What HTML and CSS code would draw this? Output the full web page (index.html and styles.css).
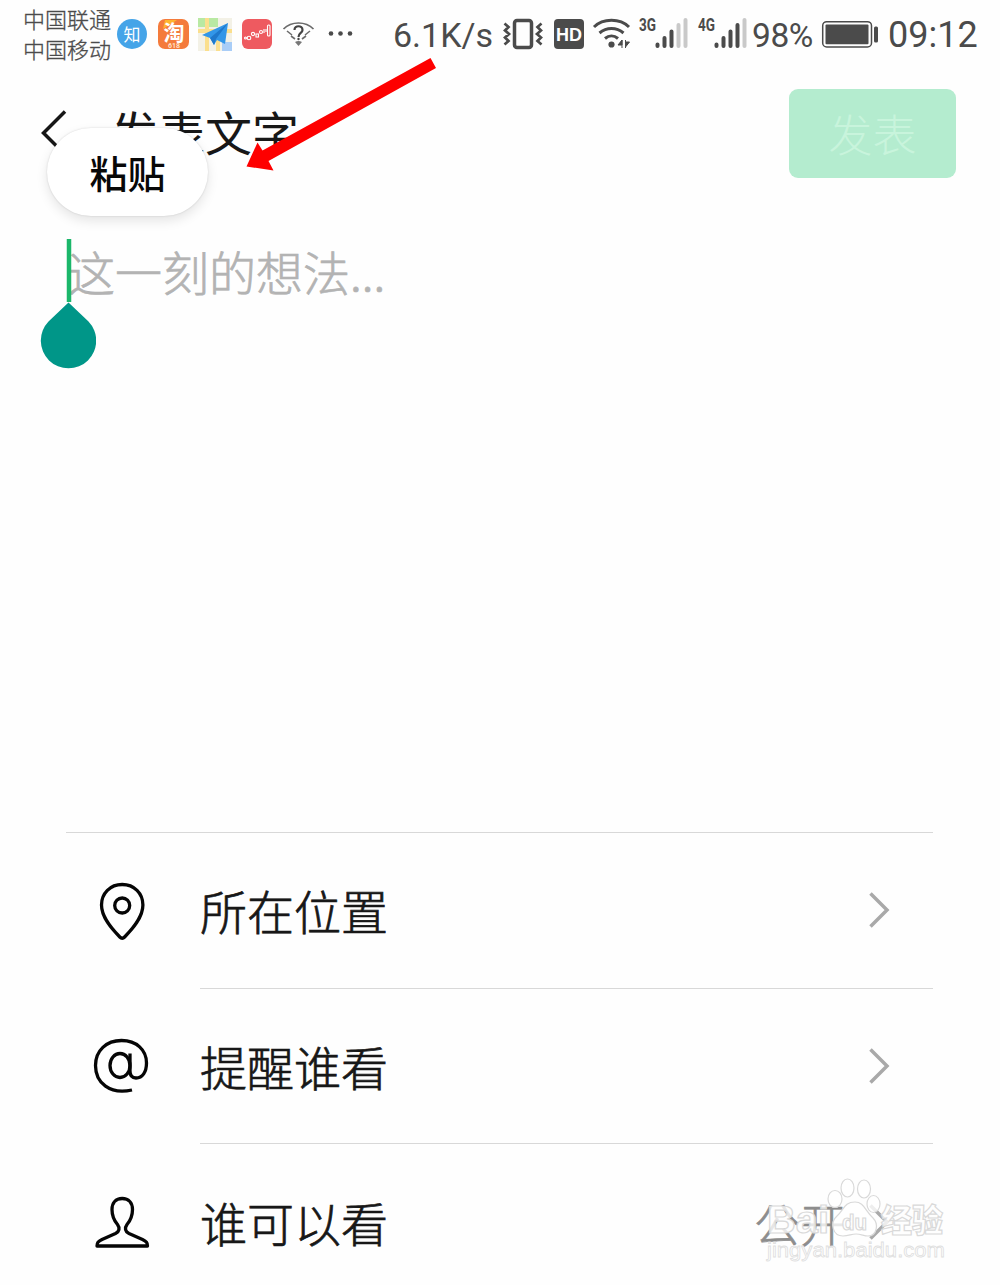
FILE: index.html
```html
<!DOCTYPE html>
<html lang="zh-CN">
<head>
<meta charset="utf-8">
<title>发表文字</title>
<link rel="stylesheet" href="styles.css">
</head>
<body>
<div class="screen">
  <header class="status">
    <div class="carriers"><div>中国联通</div><div>中国移动</div></div>
    <svg class="notices" width="240" height="40" viewBox="116 14 240 40">
      <circle cx="132" cy="34" r="15" fill="#45a4e8"/>
      <text x="132" y="40.500" class="zhi">知</text>
      <rect x="158" y="19" width="31" height="30" rx="7" fill="#f47b3c"/>
      <path d="M165 20h12l-14 9z" fill="#ffb52e"/>
      <text x="174" y="39.500" class="tao">淘</text>
      <text x="174" y="47.500" class="sale">618</text>
      <rect x="198" y="18" width="34" height="33" fill="#f3f1e6"/>
      <path d="M198 18h20v9h-20z" fill="#b9e9a3"/>
      <path d="M222 42h10v9h-10z" fill="#a9cdf7"/>
      <path d="M207 18v33M198 31h34M218 39v12" stroke="#fbdf8d" stroke-width="4"/>
      <path d="M228 23L202 35l8 3 4 7 3-5 8 4z" fill="#3296e8"/>
      <path d="M228 23L210 38l4 7 2-6z" fill="#1f78cb"/>
      <rect x="242" y="19" width="30" height="30" rx="6" fill="#ee5a60"/>
      <g fill="none" stroke="#fff" stroke-width="1.100">
        <circle cx="245.500" cy="38" r="1"/><circle cx="249" cy="38" r="1.800"/><circle cx="253" cy="34" r="1.600"/><rect x="256" y="34" width="2.500" height="3"/><circle cx="261" cy="32" r="1.500"/><path d="M264 29v4M266 29v3"/><rect x="267.500" y="25" width="2.500" height="11" rx="1"/>
      </g>
      <g fill="none" stroke="#6b6b6b" stroke-width="1.700">
        <path d="M283.500 29c8-8 22-8 30 0"/>
        <path d="M287 31l5 4M291 36l4 3M310 31l-5 4M306 36l-4 3" stroke-width="1.600"/>
        <path d="M294.500 30c0-5 8-5 8 0 0 3-4 3-4 7" stroke="#444" stroke-width="2.200"/>
      </g>
      <circle cx="298.500" cy="39" r="1.200" fill="#444"/>
      <path d="M295 42q3.500-2 7 0l-3.500 4z" fill="#777"/>
      <g fill="#4a4a4a"><circle cx="331" cy="33.500" r="2.300"/><circle cx="340.500" cy="33.500" r="2.300"/><circle cx="350" cy="33.500" r="2.300"/></g>
    </svg>
    <span class="speed">6.1K/s</span>
    <svg class="signals" width="246" height="40" viewBox="502 14 246 40">
      <g fill="none" stroke="#4b4b4b">
        <rect x="514.500" y="20.500" width="17" height="27" rx="2.500" stroke-width="3.500"/>
        <path d="M504.500 23.500l4 3.500-3.500 3.500 4 3.500-4 3.500 3.500 3.500-4 3.500M541.500 23.500l-4 3.500 3.500 3.500-4 3.500 4 3.500-3.500 3.500 4 3.500" stroke-width="2.700"/>
      </g>
      <rect x="554" y="19" width="30" height="30" rx="4" fill="#4b4b4b"/>
      <text x="569" y="40.500" class="hd">HD</text>
      <g fill="none" stroke="#4b4b4b" stroke-width="3">
        <path d="M594 27c9-9 26-9 35 0M599.500 33c7-6 17-6 24 0M605 38.500c4-3.500 9-3.500 13 0"/>
      </g>
      <circle cx="611.500" cy="44.500" r="3.100" fill="#4b4b4b"/>
      <path d="M622 40v8M618 45l4-5v5zM625.500 40v8M629.500 42h-4v5z" fill="#4b4b4b" stroke="#4b4b4b"/>
      <text x="639" y="31" class="net" textLength="17" lengthAdjust="spacingAndGlyphs">3G</text>
      <g stroke="#4b4b4b" stroke-width="4" stroke-linecap="round">
        <path d="M657.500 44.500v1.500M664.500 38v8M671.500 31.500v14.500"/>
        <path d="M678.500 25v21M685.500 20v26" stroke="#c9c9c9"/>
      </g>
      <text x="698" y="31" class="net" textLength="17" lengthAdjust="spacingAndGlyphs">4G</text>
      <g stroke="#4b4b4b" stroke-width="4" stroke-linecap="round">
        <path d="M716.500 44.500v1.500M723.500 38v8M730.500 31.500v14.500M737.500 25v21"/>
        <path d="M744.500 20v26" stroke="#c9c9c9"/>
      </g>
    </svg>
    <span class="percent">98%</span>
    <svg class="battery" width="58" height="28" viewBox="821 20 58 28">
      <rect x="822.700" y="21.700" width="48.800" height="25.300" rx="4" fill="none" stroke="#4b4b4b" stroke-width="1.500"/>
      <rect x="825.500" y="24.500" width="43" height="19.700" rx="1" fill="#4b4b4b"/>
      <rect x="874" y="26.500" width="4" height="16" rx="1.500" fill="#4b4b4b"/>
    </svg>
    <span class="clock">09:12</span>
  </header>

  <nav class="titlebar">
    <svg class="back" width="28" height="46" viewBox="0 0 28 46"><path d="M25 1.500L3.500 23 25 44.500" fill="none" stroke="#161616" stroke-width="3.500"/></svg>
    <h1 class="title">发表文字</h1>
    <button class="publish">发表</button>
  </nav>

  <main class="editor"><p class="placeholder">这一刻的想法...</p></main>

  <section class="options">
    <div class="option">
      <svg class="icon" width="58" height="62" viewBox="93 880 58 62" fill="none" stroke="#050505" stroke-width="3.300">
        <path d="M122.200 884.500c-12 0-20.700 9-20.700 20.500 0 12.500 10.500 24 18.300 32q2.400 2.500 4.800 0c7.800-8 18.300-19.500 18.300-32 0-11.500-8.700-20.500-20.700-20.500z"/>
        <circle cx="122.200" cy="905.500" r="7.500"/>
      </svg>
      <div class="cell"><span class="label">所在位置</span><svg class="chevron" width="22" height="38" viewBox="0 0 22 38"><path d="M2.500 2.500L19 19 2.500 35.500"/></svg></div>
    </div>
    <div class="option">
      <svg class="icon" width="58" height="62" viewBox="93 1036 58 62" fill="none" stroke="#050505" stroke-width="3.300">
        <path d="M132 1090c-22 5-36.500-7-36.500-24.500 0-15 11-25 26-25s25 9.500 25 22.500c0 9-4 15-10.500 15-5 0-6-3-6-7v-17.500"/>
        <ellipse cx="120" cy="1065.500" rx="10" ry="12"/>
      </svg>
      <div class="cell"><span class="label">提醒谁看</span><svg class="chevron" width="22" height="38" viewBox="0 0 22 38"><path d="M2.500 2.500L19 19 2.500 35.500"/></svg></div>
    </div>
    <div class="option">
      <svg class="icon" width="58" height="62" viewBox="93 1191 58 62" fill="none" stroke="#050505" stroke-width="3.300" stroke-linejoin="round">
        <path d="M122.200 1198.500c-6.500 0-10.200 4.500-10.200 11 0 7 2.500 11.500 5.500 15 2.500 3.500 2 7-2 9l-13.500 6c-4 2-5 3-5 6.500h50.500c0-3.500-1-4.500-5-6.500l-13.500-6c-4-2-4.500-5.500-2-9 3-3.500 5.500-8 5.500-15 0-6.500-3.800-11-10.300-11z"/>
      </svg>
      <div class="cell"><span class="label">谁可以看</span><span class="value">公开</span><svg class="chevron" width="22" height="38" viewBox="0 0 22 38"><path d="M2.500 2.500L19 19 2.500 35.500"/></svg></div>
    </div>
  </section>

  <div class="paste">粘贴</div>
  <svg class="cursor" width="56" height="131" viewBox="40 238 56 131">
    <path d="M69 239v63" stroke="#1bb76a" stroke-width="4.500"/>
    <path d="M68.500 302.500L88.500 321.500A27.700 27.700 0 1 1 48.500 321.500Z" fill="#009688"/>
  </svg>
  <svg class="arrow" width="192" height="116" viewBox="245 57 192 116"><path d="M430.500 58L436 68 268.500 161 273.500 170.500 246.500 166.500 257.500 142.500 262.500 150.500z" fill="#fe0000"/></svg>
  <svg class="watermark" width="190" height="95" viewBox="762 1173 190 95">
    <g class="mark">
      <text x="767" y="1233" class="brand" textLength="62" lengthAdjust="spacingAndGlyphs">Bai</text>
      <ellipse cx="835" cy="1199" rx="7" ry="8.500"/><ellipse cx="847.500" cy="1188" rx="6.500" ry="9"/><ellipse cx="864" cy="1189" rx="6.500" ry="9"/><ellipse cx="873.500" cy="1204" rx="6.500" ry="8.500"/>
      <path d="M855 1202c-11 0-11 8-18 14-8 7-4 20 6 20 6 0 8-2 13-2s8 2 12 2c9 0 11-12 5-18-8-7-9-16-18-16z"/>
      <text x="842" y="1230" class="du" textLength="25" lengthAdjust="spacingAndGlyphs">du</text>
      <text x="881" y="1232" class="jingyan" textLength="62" lengthAdjust="spacingAndGlyphs">经验</text>
    </g>
    <text x="767" y="1257" class="site" textLength="178" lengthAdjust="spacingAndGlyphs">jingyan.baidu.com</text>
  </svg>
</div>
</body>
</html>
```

FILE: styles.css
```css
* { box-sizing: border-box; }

body {
  margin: 0;
  background: #fefefe;
  color: #171717;
  font-family: "Noto Sans CJK SC", sans-serif;
}

.screen {
  position: relative;
  display: flex;
  flex-direction: column;
  width: 1000px;
  height: 1285px;
  overflow: hidden;
}

svg { display: block; flex: none; }

.status {
  display: flex;
  align-items: center;
  height: 68px;
  padding-left: 23px;
  color: #4b4b4b;
  font-family: Roboto, sans-serif;
  white-space: nowrap;
}

.carriers {
  width: 93px;
  padding-bottom: 3px;
  font: 300 22px/30px "Noto Sans CJK SC", sans-serif;
  -webkit-text-stroke: .3px currentColor;
}

.zhi, .tao { font: 400 17px "Noto Sans CJK SC", sans-serif; fill: #fff; text-anchor: middle; }
.tao { font-size: 21px; font-weight: 700; }
.sale { font: 700 7px Roboto, sans-serif; fill: #ffe0c8; text-anchor: middle; }
.hd { font: 700 18px "Liberation Sans", sans-serif; fill: #fff; text-anchor: middle; }
.net { font: 700 18px Roboto, sans-serif; fill: #4b4b4b; }

.speed { width: 109px; margin-left: 37px; padding-top: 2px; font-size: 34px; }
.percent { width: 69px; margin-left: 4px; padding-top: 3px; font-size: 33.5px; letter-spacing: -.4px; }
.clock { margin-left: 9px; padding-top: 2px; font-size: 36px; }

.titlebar {
  display: flex;
  align-items: center;
  height: 131px;
  padding: 0 44px 0 40px;
}

.back { overflow: hidden; margin-bottom: 2px; }

.title {
  flex: 1;
  margin: 0 0 5px 43px;
  font-size: 47px;
  font-weight: 400;
  line-height: 60px;
}

.publish {
  width: 167px;
  height: 89px;
  border: 0;
  border-radius: 9px;
  background: #b4eccf;
  color: #c8f4dc;
  font: 300 44px/89px "Noto Sans CJK SC", sans-serif;
  padding: 0;
}

.editor { flex: 1; padding: 42px 68px; }

.placeholder {
  margin: 0;
  color: #b3b3b3;
  font-size: 47px;
  font-weight: 300;
  line-height: 60px;
  -webkit-text-stroke: .7px currentColor;
}

.options {
  height: 453px;
  margin: 0 67px 0 66px;
  border-top: 1px solid #d8d8d8;
}

.option { display: flex; height: 155.5px; }

.icon { margin: 47px 49px 0 27px; }

.cell {
  flex: 1;
  display: flex;
  align-items: center;
  padding-right: 43px;
  border-bottom: 1px solid #d8d8d8;
}

.option:last-child .cell { border-bottom: 0; }

.label { flex: 1; font-size: 47px; font-weight: 300; line-height: 60px; -webkit-text-stroke: .7px currentColor; }
.value { margin-right: 22px; color: #8d8d8d; font-size: 46px; font-weight: 300; line-height: 60px; -webkit-text-stroke: .7px currentColor; }
.chevron { fill: none; stroke: #a9a9a9; stroke-width: 3.5; }

.paste {
  position: absolute;
  left: 47px;
  top: 128px;
  width: 161px;
  height: 88px;
  border-radius: 44px;
  background: #fff;
  box-shadow: 0 5px 12px rgba(0, 0, 0, .1), 0 0 2px rgba(0, 0, 0, .15);
  color: #080808;
  font-size: 38px;
  font-weight: 500;
  line-height: 88px;
  text-align: center;
}

.cursor { position: absolute; left: 40px; top: 238px; }
.arrow { position: absolute; left: 245px; top: 57px; }
.watermark { position: absolute; left: 762px; top: 1173px; }

.mark { fill: rgba(255, 255, 255, .8); stroke: #d9d9d9; stroke-width: 1.2; }
.brand { font: 700 38px "Liberation Sans", sans-serif; }
.du { font: 700 22px "Liberation Sans", sans-serif; }
.jingyan { font: 900 32px "Noto Sans CJK SC", sans-serif; }
.site { font: 400 21px "Liberation Sans", sans-serif; fill: #fff; stroke: #dedede; stroke-width: .8; }
```
